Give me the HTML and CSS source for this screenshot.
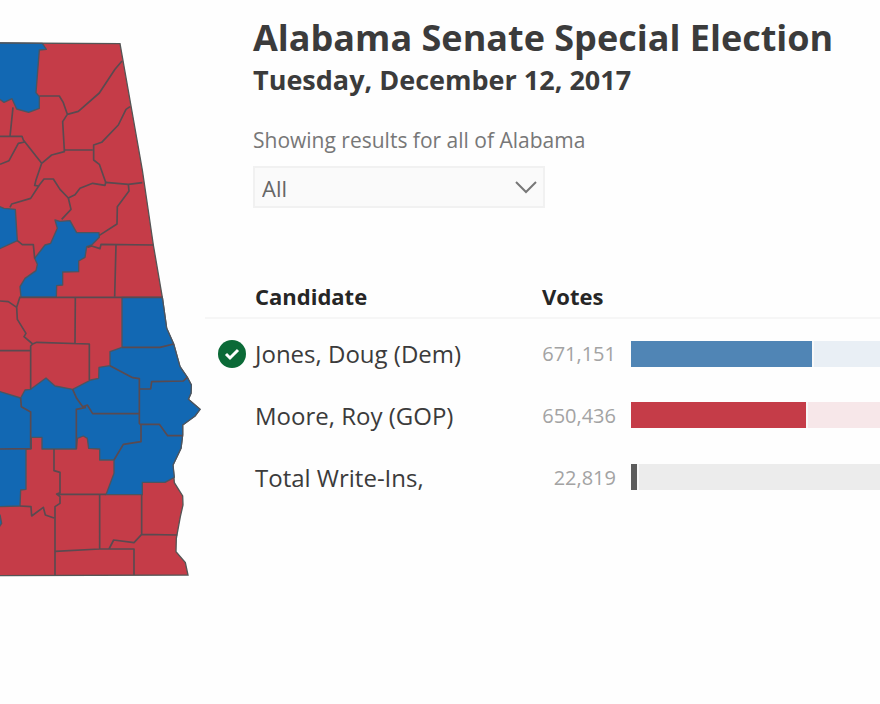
FILE: index.html
```html
<!DOCTYPE html>
<html lang="en">
<head>
<meta charset="utf-8">
<title>Alabama Senate Special Election</title>
<link rel="stylesheet" href="styles.css">
</head>
<body>
<div class="page">
  <aside class="map">
    <svg viewBox="0 120 615 1620" role="img" aria-label="Results by county">
      <path class="gop" d="M-9 129L360 131L427 510L460 735L487 892L500 985L521 1032L540 1100L562 1132L574 1155L573 1180L565 1198L600 1228L585 1248L548 1275L548 1305L543 1345L519 1395L523 1448L548 1488L549 1515L541 1550L529 1615L528 1655L556 1688L564 1725L-9 1727Z"/>
      <g class="dem">
        <path d="M-9 129L127 130L139 148L118 150L108 278L118 290L118 325L86 337L50 327L36 296L12 307L-9 292Z"/>
        <path d="M165 660L180 664L210 662L230 698L297 698L298 712L275 735L260 740L255 772L236 783L236 815L188 816L188 855L170 857L169 892L63 892L60 860L75 835L108 812L112 793L104 775L135 735L152 730L172 685Z"/>
        <path d="M-9 617L12 625L46 628L52 722L-9 750Z"/>
        <path d="M366 892L487 892L500 985L521 1032L540 1100L562 1132L574 1155L573 1180L565 1198L600 1228L585 1248L548 1275L548 1305L543 1345L519 1395L523 1432L495 1447L427 1447L427 1484L318 1484L342 1420L342 1380L299 1380L299 1347L266 1345L262 1315L250 1308L232 1315L229 1347L126 1347L126 1312L94 1312L94 1346L78 1348L78 1468L62 1470L60 1518L-9 1520L-9 1172L62 1194L75 1170L92 1168L138 1134L165 1158L218 1168L272 1140L296 1135L297 1102L330 1097L330 1055L366 1042Z"/>
        <path d="M-9 1540L0 1545L5 1570L-9 1590Z"/>
      </g>
      <g class="borders">
        <path d="M118 288H178L190 308L202 343L235 334L298 279L345 208L366 183M202 343L188 365L193 450H278M390 320L378 328L355 375L305 427L281 435V480L298 493L317 547"/>
        <path d="M193 450V455L155 465L125 490L70 420L66 409H0M39 322L30 409M74 426L55 430L27 482L0 493M125 490L108 540L104 556L115 558"/>
        <path d="M30 622L35 612L92 595L118 555L132 537H160L180 568L205 594L225 584L240 565L278 550L315 556L317 547L385 553L427 548M385 553L387 573L352 620L351 672L298 706"/>
        <path d="M205 594L213 628L185 658M262 742L275 738L300 746L303 733L460 735M348 735L344 890M52 722L67 734H100L104 775"/>
        <path d="M57 892H487M0 903L25 905L50 922L52 958L78 1000L72 1010L98 1032L92 1038V1168M60 890L50 922M226 892L225 1030M98 1032L110 1027L268 1032V1140M0 1052H92"/>
        <path d="M366 1042H480L521 1032M330 1097L398 1133L418 1136V1270L423 1275V1325L370 1333L342 1380M418 1167H452L455 1145L550 1143L562 1132M423 1273H478L503 1307H548"/>
        <path d="M218 1168L230 1195L248 1220L262 1215L278 1241H418M258 1222L229 1228V1347M62 1194L64 1220L92 1236V1345M0 1347L94 1346"/>
        <path d="M162 1347V1412L180 1417V1478L170 1482L180 1490V1510L165 1520V1725M172 1483H318M60 1518L93 1520L95 1548L130 1522L136 1545L162 1554"/>
        <path d="M299 1484V1647M165 1654L299 1647H402V1725M327 1647L341 1620L402 1628L425 1603L532 1605M425 1484V1603"/>
      </g>
    </svg>
  </aside>
  <main class="results">
    <header class="intro">
      <h1>Alabama Senate Special Election</h1>
      <h2>Tuesday, December 12, 2017</h2>
      <label class="caption" for="county">Showing results for all of Alabama</label>
      <div class="picker">
        <select id="county"><option>All</option></select>
        <svg class="chevron" viewBox="0 0 24 14" aria-hidden="true"><path d="M2 2L12 12L22 2"/></svg>
      </div>
    </header>
    <table class="tally">
      <thead>
        <tr><th class="mark"></th><th class="name">Candidate</th><th class="votes">Votes</th><th class="share"></th></tr>
      </thead>
      <tbody>
        <tr>
          <td class="mark"><svg class="winner" viewBox="0 0 28 28" role="img" aria-label="Winner"><circle cx="14" cy="14" r="14"/><path d="M8 14L12 18L20 10"/></svg></td>
          <td class="name">Jones, Doug (Dem)</td><td class="votes">671,151</td>
          <td class="share"><div class="bar blue"><span style="width:181px"></span></div></td>
        </tr>
        <tr>
          <td class="mark"></td>
          <td class="name">Moore, Roy (GOP)</td><td class="votes">650,436</td>
          <td class="share"><div class="bar red"><span style="width:175px"></span></div></td>
        </tr>
        <tr>
          <td class="mark"></td>
          <td class="name">Total Write-Ins,</td><td class="votes">22,819</td>
          <td class="share"><div class="bar gray"><span style="width:6px"></span></div></td>
        </tr>
      </tbody>
    </table>
  </main>
</div>
</body>
</html>
```
FILE: styles.css
```css
* { box-sizing: border-box; }
body {
  margin: 0;
  background: #fefefe;
  color: #3b3b3b;
  font-family: "Open Sans", "Noto Sans", sans-serif;
}
.page { display: flex; align-items: flex-start; }
.map { flex: 0 0 205px; padding-top: 40px; }
.map svg { display: block; width: 100%; }
.gop { fill: #c53c48; stroke: #555; stroke-width: 4; }
.dem { fill: #1268b3; stroke: #4b5560; stroke-width: 4; stroke-linejoin: round; }
.borders { fill: none; stroke: #5a4a50; stroke-width: 5; stroke-linejoin: round; }
.results { flex: 1; min-width: 0; }
.intro { padding: 14px 0 0 48px; }
h1, h2 { margin: 0; font-weight: 700; white-space: nowrap; }
h1 { font-size: 36px; line-height: 48px; }
h2 { font-size: 27px; line-height: 36px; }
.caption {
  display: block;
  margin-top: 28px;
  font-size: 21px;
  line-height: 28px;
  color: #777;
}
.picker { position: relative; width: 292px; margin-top: 12px; }
.picker select {
  display: block;
  width: 100%;
  height: 42px;
  padding: 2px 7px 0;
  appearance: none;
  border: 2px solid #f1f1f1;
  border-radius: 0;
  background: #fafafa;
  color: #666;
  font: 22px/28px "Open Sans", "Noto Sans", sans-serif;
}
.chevron {
  position: absolute;
  top: 14px;
  right: 7px;
  width: 24px;
  height: 14px;
  fill: none;
  stroke: #777;
  stroke-width: 2;
  pointer-events: none;
}
.tally {
  width: 100%;
  margin-top: 67px;
  border-collapse: collapse;
  table-layout: fixed;
}
.tally th, .tally td { padding: 0; text-align: left; white-space: nowrap; }
.tally th {
  height: 43px;
  border-bottom: 2px solid #f6f6f6;
  color: #262626;
  font-size: 22px;
  line-height: 40px;
}
.tally td { height: 62px; }
.tally tbody tr:first-child td { height: 66px; padding-top: 4px; }
.tally .mark { width: 50px; padding-left: 13px; }
.tally .name { width: 287px; font-size: 24px; }
.tally th.name { font-size: 22px; }
.tally .votes { width: 89px; }
.tally td.votes { padding-right: 15px; text-align: right; font-size: 20px; color: #a3a3a3; }
.winner { display: block; width: 28px; height: 28px; fill: #0b6a37; }
.winner path { fill: none; stroke: #fff; stroke-width: 3; }
.bar { height: 26px; }
.bar span { display: block; box-sizing: content-box; height: 100%; border-right: 2px solid #f8f8f8; }
.blue { background: #e9eff5; }
.blue span { background: #5085b5; background-clip: padding-box; }
.red { background: #f7e7e9; }
.red span { background: #c53c48; background-clip: padding-box; }
.gray { background: #ececec; }
.gray span { background: #5c5c5c; background-clip: padding-box; }
```
